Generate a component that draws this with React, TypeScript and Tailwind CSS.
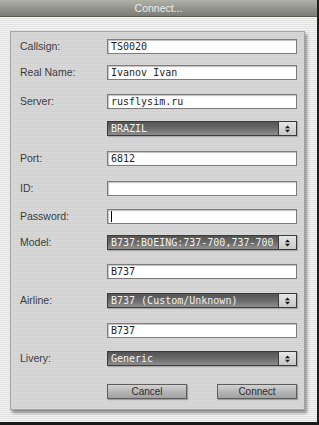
import React from 'react';

const sans = "font-['Liberation_Sans',Arial,sans-serif]";
const mono = "font-['DejaVu_Sans_Mono',monospace]";

function Label({ text }: { text: string }) {
  return <div className={`w-[87px] text-[10.5px] leading-none text-[#3c3c3c] ${sans}`}>{text}</div>;
}

function TextField({ value, caret }: { value?: string; caret?: boolean }) {
  return (
    <div className="w-[190px] h-[15px] bg-white border border-[#7c7c7c] shadow-[inset_1px_1px_1px_rgba(0,0,0,0.25)] flex items-center pl-[3px]">
      {caret && <div className="w-px h-[11px] bg-black" />}
      <span className={`text-[10px] leading-[12px] text-[#1e1e1e] ${mono}`}>{value}</span>
    </div>
  );
}

function Select({ value }: { value: string }) {
  return (
    <div className="w-[190px] h-[15px] flex border border-[#3a3a3a] shadow-[1px_1px_1px_rgba(0,0,0,0.2)]">
      <div className="flex-1 flex items-center pl-[3px] bg-[linear-gradient(to_bottom,#545454,#6a6a6a_50%,#8e8e8e)] overflow-hidden">
        <span className={`text-[10px] leading-[12px] text-[#f2f2f2] whitespace-nowrap ${mono}`}>{value}</span>
      </div>
      <div className="w-[18px] border-l border-[#3a3a3a] bg-[linear-gradient(to_bottom,#e6e6e6,#c8c8c8)] flex items-center justify-center">
        <svg width="5" height="8" viewBox="0 0 5 8">
          <path d="M2.5 0.5 L5 3.2 L0 3.2 Z" fill="#111" />
          <path d="M2.5 7.5 L5 4.8 L0 4.8 Z" fill="#111" />
        </svg>
      </div>
    </div>
  );
}

function Button({ text }: { text: string }) {
  return (
    <div
      className={`w-[80px] h-[15px] border border-[#5e5e5e] bg-[linear-gradient(to_bottom,#d2d2d2,#b4b4b4_55%,#a2a2a2)] shadow-[1px_1px_1px_rgba(0,0,0,0.25)] flex items-center justify-center text-[10px] leading-none text-[#2e2e2e] ${sans}`}
    >
      {text}
    </div>
  );
}

export default function App() {
  return (
    <div className="w-[319px] h-[425px] flex flex-col overflow-hidden border-r-2 border-[#1e1e1e] bg-[#1a1a1a]">
      {/* Title bar */}
      <div
        className={`h-[17px] flex-shrink-0 flex items-center justify-center border-b border-[#5c5e58] bg-[linear-gradient(to_bottom,#b0b2aa,#8e9088_60%,#7c7e76)] text-[10.5px] leading-none text-[#ececec] ${sans}`}
      >
        Connect...
      </div>

      {/* Window body with pinstripes */}
      <div className="h-[405px] flex-shrink-0 pt-[14px] pl-[10px] bg-[repeating-linear-gradient(to_bottom,#f3f3f3_0px,#f3f3f3_1px,#e3e3e3_1px,#e3e3e3_2px)]">
        <div className="w-[295px] h-[379px] border border-[#a4a4a4] shadow-[2px_3px_3px_rgba(0,0,0,0.4)] bg-[repeating-linear-gradient(to_bottom,#d8d8d8_0px,#d8d8d8_1px,#d1d1d1_1px,#d1d1d1_2px)] pl-[9px] pt-[7px] flex flex-col">
          <div className="flex items-center h-[15px]">
            <Label text="Callsign:" />
            <TextField value="TS0020" />
          </div>
          <div className="flex items-center h-[15px] mt-[11px]">
            <Label text="Real Name:" />
            <TextField value="Ivanov Ivan" />
          </div>
          <div className="flex items-center h-[15px] mt-[14px]">
            <Label text="Server:" />
            <TextField value="rusflysim.ru" />
          </div>
          <div className="flex items-center h-[15px] mt-[12px]">
            <Label text="" />
            <Select value="BRAZIL" />
          </div>
          <div className="flex items-center h-[15px] mt-[15px]">
            <Label text="Port:" />
            <TextField value="6812" />
          </div>
          <div className="flex items-center h-[15px] mt-[15px]">
            <Label text="ID:" />
            <TextField />
          </div>
          <div className="flex items-center h-[15px] mt-[13px]">
            <Label text="Password:" />
            <TextField caret />
          </div>
          <div className="flex items-center h-[15px] mt-[11px]">
            <Label text="Model:" />
            <Select value="B737:BOEING:737-700,737-700" />
          </div>
          <div className="flex items-center h-[15px] mt-[14px]">
            <Label text="" />
            <TextField value="B737" />
          </div>
          <div className="flex items-center h-[15px] mt-[14px]">
            <Label text="Airline:" />
            <Select value="B737 (Custom/Unknown)" />
          </div>
          <div className="flex items-center h-[15px] mt-[15px]">
            <Label text="" />
            <TextField value="B737" />
          </div>
          <div className="flex items-center h-[15px] mt-[13px]">
            <Label text="Livery:" />
            <Select value="Generic" />
          </div>
          <div className="flex items-center h-[15px] mt-[18px] pl-[87px] gap-[30px]">
            <Button text="Cancel" />
            <Button text="Connect" />
          </div>
        </div>
      </div>
    </div>
  );
}
